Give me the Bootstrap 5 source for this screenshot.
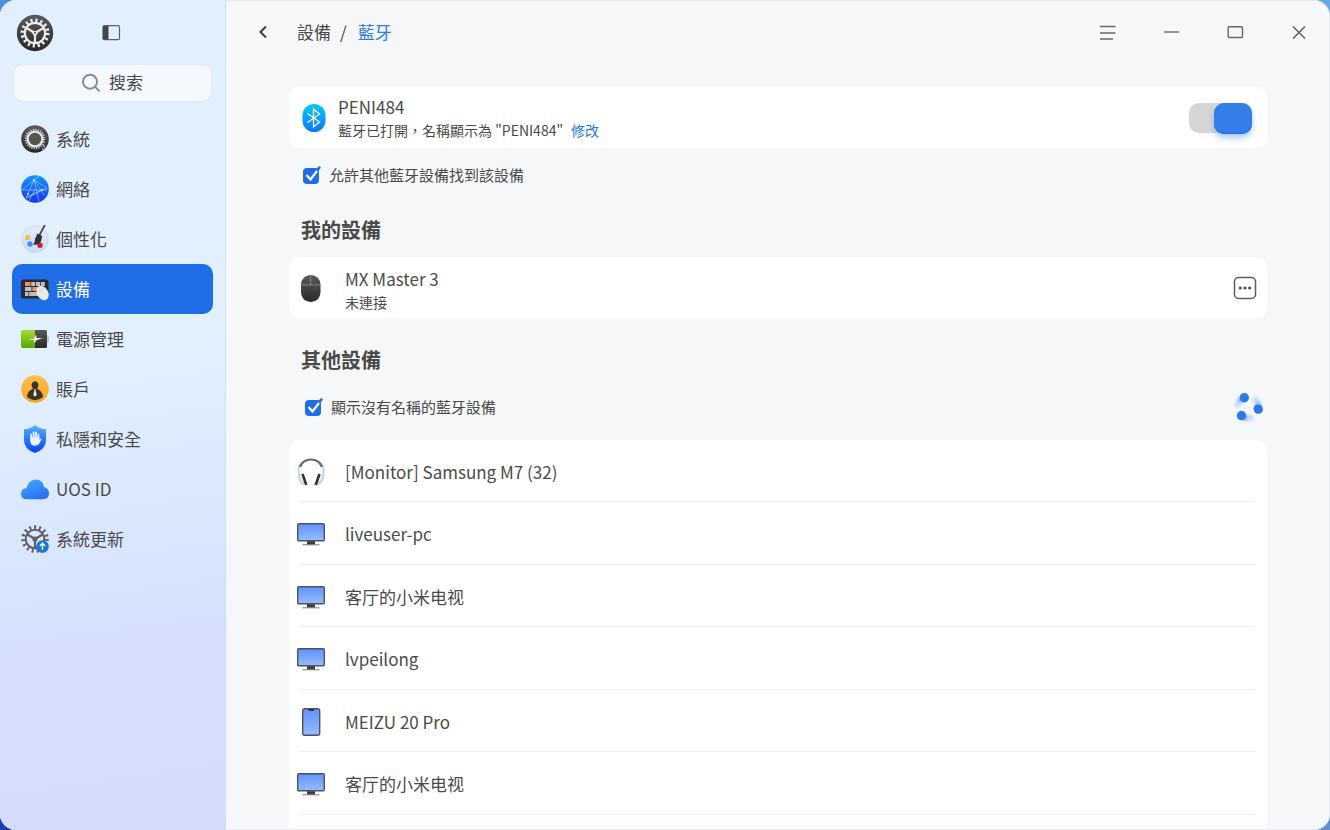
<!DOCTYPE html>
<html lang="zh-Hant">
<head>
<meta charset="utf-8">
<meta name="viewport" content="width=device-width, initial-scale=1">
<title>藍牙</title>
<link href="https://cdn.jsdelivr.net/npm/bootstrap@5.3.0/dist/css/bootstrap.min.css" rel="stylesheet">
<style>
  :root { --accent: #1f6ee7; --ink: #4a4a4a; }
  body {
    font-family: "Noto Sans CJK TC", "Noto Sans CJK SC", sans-serif;
    font-size: 17px; line-height: 24px; color: var(--ink);
    background: linear-gradient(90deg, #4a90dc 0 50%, #68a8e6 50%) top / 100% 50% no-repeat,
                linear-gradient(90deg, #1a3db8 0 50%, #6490cc 50%) bottom / 100% 50% no-repeat;
  }
  button { font: inherit; color: inherit; }
  .app-window { border-radius: 16px; background: #f6f7f9; box-shadow: inset 0 0 0 1px #e3eaf6; }
  .sidebar {
    width: 226px; padding: 0 12px; border-right: 1px solid #d3def0;
    background: linear-gradient(172deg, #e1efff 0%, #e2f0fe 42%, #dae7fd 63%, #d5dffd 78%, #d4dcfd 100%);
  }
  .sidebar-head { height: 64px; padding: 1px 0 0 4px; gap: 48px; }
  .search-box {
    height: 38px; margin: 0 1px; border: 1px solid #e4eaf1; border-radius: 10px; background: #f5f8fd;
  }
  .search-box input { width: 35px; height: 24px; padding: 0; margin-bottom: 2px; border: 0; outline: 0; background: none; color: var(--ink); }
  .search-box input::placeholder { color: var(--ink); opacity: 1; }
  .side-nav { margin-top: 12px; }
  .side-nav .nav-link {
    height: 50px; padding: 0 9px; gap: 7px; border-radius: 10px; color: var(--ink);
    display: flex; align-items: center;
  }
  .side-nav .nav-link.active { background: var(--accent); color: #fff; }
  .side-nav svg { width: 28px; height: 28px; flex: none; }
  .titlebar { height: 64px; padding: 0 19px 0 28px; }
  .crumbs { padding-left: 25px; gap: 9px; }
  .crumbs a { color: inherit; text-decoration: none; }
  .crumbs .current { color: #2f7cea; padding-left: 2px; }
  .win-buttons { gap: 40px; }
  .content { padding: 23px 63px 1px; }
  .panel { background: #fff; border-radius: 10px; }
  .device-panel { height: 61px; padding: 0 10px 0 8px; }
  .host-panel { padding: 0 15px 0 13px; }
  .sub-text { font-size: 14px; line-height: 22px; }
  .sub-text a { color: #2577e3; text-decoration: none; }
  .check-row { height: 22px; font-size: 15px; line-height: 20px; gap: 7px; }
  .check-row label { padding-bottom: 2px; }
  .visible-row { margin: 17px 0 1px 13px; }
  .unnamed-row { margin: 10px 3px 21px 15px; }
  .tick-input {
    appearance: none; width: 20px; height: 20px; margin: 0; flex: none;
    background: url("data:image/svg+xml,%3Csvg xmlns='http://www.w3.org/2000/svg' viewBox='0 0 20 20'%3E%3Crect x='1' y='2' width='16' height='16' rx='4' fill='%231f6ee7'/%3E%3Cpath d='M4.500 9l4 4.500L15 5' fill='none' stroke='white' stroke-width='2.200'/%3E%3Cpath d='M16.200 3l1-1.300' stroke='%231f6ee7' stroke-width='2.800' stroke-linecap='round'/%3E%3C/svg%3E");
  }
  .section-title { font-size: 20px; line-height: 50px; font-weight: 700; margin: 17px 0 2px 12px; }
  .switch-input {
    appearance: none; position: relative; width: 63px; height: 30px; margin: 0;
    border-radius: 10px; background: #d6d6d6;
  }
  .switch-input::before {
    content: ""; position: absolute; inset: 0 0 -1px 25px; border-radius: 10px;
    background: #357de9; box-shadow: 0 4px 6px #2f7cea66, inset 0 -1px 1px #1f6ee7;
  }
  .device-list { border-radius: 10px 10px 0 0; }
  .device-list li { position: relative; height: 62px; padding: 1px 12px 0 8px; gap: 20px; }
  .device-list li:nth-child(even) { height: 63px; }
  .device-list li::after {
    content: ""; position: absolute; left: 11px; right: 12px; bottom: 0; height: 1px; background: #f0f0f0;
  }
  .device-list svg { width: 28px; height: 28px; flex: none; }
</style>
</head>
<body>
<svg width="0" height="0" class="position-absolute" aria-hidden="true">
  <defs>
    <linearGradient id="gDark" x2="0" y2="1"><stop stop-color="#5a5a5a"/><stop offset="1" stop-color="#292929"/></linearGradient>
    <linearGradient id="gBlue" x2="0" y2="1"><stop stop-color="#1597ff"/><stop offset="1" stop-color="#1434f6"/></linearGradient>
    <linearGradient id="gShield" x2="0" y2="1"><stop stop-color="#4cb3ff"/><stop offset="1" stop-color="#0b3ff8"/></linearGradient>
    <linearGradient id="gBt" x2="0" y2="1"><stop stop-color="#0bc8fc"/><stop offset="1" stop-color="#0877fc"/></linearGradient>
    <linearGradient id="gCloud" x2=".6" y2="1"><stop stop-color="#3fb0ff"/><stop offset="1" stop-color="#2a70fa"/></linearGradient>
    <linearGradient id="gScreen" x2="0" y2="1"><stop stop-color="#5f92fb"/><stop offset="1" stop-color="#97bdfd"/></linearGradient>
    <linearGradient id="gGreen" x2="0" y2="1"><stop stop-color="#a2df32"/><stop offset="1" stop-color="#58a606"/></linearGradient>
    <linearGradient id="gGold" x2="0" y2="1"><stop stop-color="#ffc04f"/><stop offset="1" stop-color="#f9a51e"/></linearGradient>
    <linearGradient id="gPale" x2="0" y2="1"><stop stop-color="#e6edf9"/><stop offset="1" stop-color="#c7dcfb"/></linearGradient>
    <symbol id="monitor" viewBox="0 0 28 28">
      <rect x=".7" y="3.700" width="26.600" height="17" rx="1" fill="url(#gScreen)" stroke="#4c5363" stroke-width="1.400"/>
      <path d="M10 21.200h8v3.400h-8z" fill="#3c3c3c"/><path d="M5.500 24.800h17" stroke="#777" stroke-width="1"/>
    </symbol>
  </defs>
</svg>

<div class="app-window d-flex vh-100 overflow-hidden">
  <aside class="sidebar flex-shrink-0">
    <div class="sidebar-head d-flex align-items-center">
      <svg width="38" height="38" viewBox="0 0 38 38" aria-hidden="true">
        <circle cx="19" cy="19" r="18.200" fill="url(#gDark)"/>
        <g fill="none" stroke="#ececec">
          <circle cx="19" cy="19" r="12.700" stroke-width="3.600" stroke-dasharray="2.200 2.787"/>
          <circle cx="19" cy="19" r="10.200" stroke-width="2.200"/>
          <path d="M19 19v9.500M19 19l-8.500-5M19 19l8.500-5" stroke-width="2.200"/>
        </g>
        <path d="M19 23.500l-4.500-7q4.500 1 9 0z" fill="#ececec"/><circle cx="19" cy="18.800" r="1" fill="#555"/>
      </svg>
      <button class="btn p-0 border-0 d-flex" aria-label="側欄">
        <svg width="19" height="18" viewBox="0 0 19 18"><rect x="1" y="1.700" width="16.500" height="14" rx="1.500" fill="none" stroke="#5d6066" stroke-width="1.200"/><path d="M1 2h5.500v13.500H1z" fill="#43464d"/></svg>
      </button>
    </div>
    <label class="search-box d-flex align-items-center justify-content-center gap-2">
      <svg width="20" height="20" viewBox="0 0 20 20" fill="none" stroke="#888b90" stroke-width="1.900"><circle cx="9" cy="8.700" r="7"/><path d="M14 13.700l4.600 4.700"/></svg>
      <input type="text" placeholder="搜索" aria-label="搜索">
    </label>
    <nav class="side-nav nav flex-column">
      <a class="nav-link" href="#"><svg viewBox="0 0 28 28"><circle cx="14" cy="14" r="13.800" fill="url(#gDark)"/><circle cx="14" cy="14" r="9.300" fill="none" stroke="#d7d7d7" stroke-width="2" stroke-dasharray="1.200 1.234"/><circle cx="14" cy="14" r="7.400" fill="#555" stroke="#e3e3e3" stroke-width="2.400"/><path d="M20 19l4 2-3 4" fill="none" stroke="#bbb" stroke-width="1.500" stroke-dasharray="1.500 1"/></svg>系統</a>
      <a class="nav-link" href="#"><svg viewBox="0 0 28 28"><circle cx="14" cy="14" r="13.800" fill="url(#gBlue)"/><g fill="none" stroke="#a9d6ff" stroke-width=".6"><path d="M1 15h25M13 5L5 23l17-9M13 5l5 21M13 5l10 15M5 23L26 13M18 1l-5 4 13 8M14 14l-6 12M13 5L1 15"/></g><circle cx="13" cy="5" r="1" fill="#d7efff"/><circle cx="7" cy="19" r="1" fill="#d7efff"/><circle cx="21" cy="15" r="1" fill="#d7efff"/></svg>網絡</a>
      <a class="nav-link" href="#"><svg viewBox="0 0 28 28"><circle cx="14" cy="14.300" r="13.300" fill="url(#gPale)" stroke="#bdcbe3" stroke-width=".5"/><circle cx="12.500" cy="6.500" r="3" fill="#e8effc" stroke="#cedbf1" stroke-width=".5"/><circle cx="6.700" cy="12.700" r="2.600" fill="#f6bb45"/><circle cx="9" cy="19" r="2.700" fill="#3f8cf5"/><circle cx="19" cy="20.200" r="2.700" fill="#df1740"/><path d="M23.600.5L18.600 10" stroke="#5a5148" stroke-width="1.900" stroke-linecap="round"/><path d="M16.500 8.500l4.700 2.500-1.200 5.500c-1.500 2.700-4.500 3.400-8 3.300 2-1.800 1.500-4.600 2.500-7z" fill="#333"/></svg>個性化</a>
      <a class="nav-link active" href="#" aria-current="page"><svg viewBox="0 0 28 28"><rect y="4.500" width="27.500" height="19" rx="2.500" fill="#252c36"/><path d="M4 7h5.500v4H4z" fill="#fb8852"/><path d="M10.200 7h4v4h-4zM15 7h4v4h-4zM19.800 7h4v4h-4zM4 12h6.500v4H4zM4 17h3.500v4H4zM8.200 17H18v4H8.200zM19 12h5v4h-5z" fill="#bcc0c4"/><path d="M11.300 12H18v4h-6.700z" fill="#fb8852"/><ellipse cx="21.500" cy="18" rx="5.500" ry="7.800" transform="rotate(-32 21.500 18)" fill="#eaeaea"/><path d="M16.500 15.500c3.500 1.500 5.500 0 7-3.500M20 15l-2-3" fill="none" stroke="#c9c9c9" stroke-width=".6"/></svg>設備</a>
      <a class="nav-link" href="#"><svg viewBox="0 0 28 28"><path d="M14 5h10.500q1.500 0 1.500 1.500v15q0 1.500-1.500 1.500H14z" fill="url(#gDark)"/><path d="M14 5H2Q0 5 0 7v14q0 2 2 2h12z" fill="url(#gGreen)"/><path d="M26.300 10.500h.5q1 0 1 1v5q0 1-1 1h-.5z" fill="#b9bdc2"/><path d="M7 14.200l6-.4 2-4.300.7 3.500 6 .3-6 1.700-2.200 3-.5-3z" fill="#fff"/></svg>電源管理</a>
      <a class="nav-link" href="#"><svg viewBox="0 0 28 28"><circle cx="14" cy="14" r="13.800" fill="url(#gGold)"/><path d="M6 22c0-4 3-7 6-8.200q-3-4 0-6.800 2-1.400 4 0 3 2.800 0 6.800c3 1.200 6 4.200 6 8.200q-8 6.500-16 0z" fill="#3b342c"/><path d="M13 14.500h2l-.3 1.800 1.100 3.500-1.800 2-1.800-2 1.100-3.500z" fill="#eee"/></svg>賬戶</a>
      <a class="nav-link" href="#"><svg viewBox="0 0 28 28"><path d="M14 .3Q19 4.200 25 4.300v11.200Q25 24 14 28 3 24 3 15.500V4.300Q9 4.200 14 .3z" fill="url(#gShield)"/><path d="M10.200 15V9.500M12.600 14V7.500M15 14V7.500M17.400 15V9.500" stroke="#e8f4ff" stroke-width="1.800" stroke-linecap="round"/><path d="M9.300 12h9v3l1.100-1.300q1.300-.4 1 .7L18 19q-1.500 1.800-4.300 1.700-4.400-.2-4.400-4.400z" fill="#e8f4ff"/></svg>私隱和安全</a>
      <a class="nav-link" href="#"><svg viewBox="0 0 28 28"><path d="M6 24.300q-6-.2-6-5.400 0-5 5.500-5.800Q7.700 4.500 15 4.500q6.500.2 8 7.500 5 1.500 5 6.500-.2 5.600-6 5.800z" fill="url(#gCloud)"/></svg>UOS ID</a>
      <a class="nav-link" href="#"><svg viewBox="0 0 28 28"><g fill="none" stroke="#606164"><circle cx="14" cy="14" r="11.800" stroke-width="4" stroke-dasharray="2 2.943"/><circle cx="14" cy="14" r="9.300" stroke-width="2"/><path d="M14 14v9.500M14 14L6 9.200M14 14l8-4.800" stroke-width="2.200"/></g><circle cx="14" cy="14" r="2.600" fill="#606164"/><circle cx="21.500" cy="21.500" r="6.300" fill="#1479d4"/><path d="M21.500 25v-6.500M18.800 21l2.700-2.800 2.700 2.800" fill="none" stroke="#fff" stroke-width="1.400"/></svg>系統更新</a>
    </nav>
  </aside>

  <main class="flex-grow-1 d-flex flex-column overflow-hidden">
    <header class="titlebar d-flex align-items-center">
      <button class="btn p-0 border-0 d-flex" aria-label="返回"><svg width="18" height="18" viewBox="0 0 18 18"><path d="M12 3.500L6.500 9l5.500 5.500" fill="none" stroke="#3c3c3c" stroke-width="2"/></svg></button>
      <nav class="crumbs d-flex flex-grow-1" aria-label="路徑">
        <a href="#">設備</a><span>/</span><a class="current" href="#">藍牙</a>
      </nav>
      <div class="win-buttons d-flex">
        <button class="btn p-0 border-0 d-flex" aria-label="選單"><svg width="24" height="24" viewBox="0 0 24 24"><path d="M5 6.500h15.500M5 13h15.500M5 19h13" fill="none" stroke="#66686b" stroke-width="1.500"/></svg></button>
        <button class="btn p-0 border-0 d-flex" aria-label="最小化"><svg width="24" height="24" viewBox="0 0 24 24"><path d="M5 12h15" stroke="#77797c" stroke-width="1.600"/></svg></button>
        <button class="btn p-0 border-0 d-flex" aria-label="最大化"><svg width="24" height="24" viewBox="0 0 24 24"><rect x="5.200" y="6.700" width="14.300" height="10.800" rx="1" fill="none" stroke="#66686b" stroke-width="1.400"/></svg></button>
        <button class="btn p-0 border-0 d-flex" aria-label="關閉"><svg width="24" height="24" viewBox="0 0 24 24"><path d="M6 6.500l12 12M18 6.500l-12 12" stroke="#5f6164" stroke-width="1.600"/></svg></button>
      </div>
    </header>

    <div class="content d-flex flex-column flex-grow-1">
      <section class="panel device-panel host-panel d-flex align-items-center flex-shrink-0">
        <svg width="24" height="28" viewBox="0 0 24 28" aria-hidden="true"><rect x=".5" width="23" height="28" rx="11.500" fill="url(#gBt)"/><path d="M5.500 9.500l12 8.500-6 4.800V5.200l6 4.800-12 8.500" fill="none" stroke="#fff" stroke-width="1.300"/></svg>
        <div class="flex-grow-1 ms-2 ps-1">
          <div>PENI484</div>
          <div class="sub-text d-flex"><span>藍牙已打開，名稱顯示為 "PENI484"</span><a class="ms-2" href="#">修改</a></div>
        </div>
        <input class="switch-input" type="checkbox" role="switch" checked aria-label="藍牙">
      </section>
      <div class="check-row visible-row d-flex align-items-center flex-shrink-0">
        <input class="tick-input" type="checkbox" id="discoverable" checked>
        <label for="discoverable">允許其他藍牙設備找到該設備</label>
      </div>

      <h2 class="section-title">我的設備</h2>
      <section class="panel device-panel d-flex align-items-center flex-shrink-0">
        <svg width="28" height="28" viewBox="0 0 28 28" aria-hidden="true"><rect x="4" y="1" width="19.500" height="27" rx="9.500" fill="url(#gDark)"/><path d="M4 11h19.500M13.700 1v10" stroke="#969696" stroke-width=".8"/></svg>
        <div class="flex-grow-1 ms-3 ps-1 pt-1">
          <div>MX Master 3</div>
          <div class="sub-text">未連接</div>
        </div>
        <button class="btn p-0 border-0 d-flex" aria-label="更多"><svg width="24" height="24" viewBox="0 0 24 24"><rect x="1.500" y="1.500" width="21" height="21" rx="4" fill="none" stroke="#5c5c5c" stroke-width="1.500"/><g fill="#4c4c4c"><circle cx="7.300" cy="12" r="1.600"/><circle cx="12" cy="12" r="1.600"/><circle cx="16.700" cy="12" r="1.600"/></g></svg></button>
      </section>

      <h2 class="section-title">其他設備</h2>
      <div class="check-row unnamed-row d-flex align-items-center flex-shrink-0">
        <input class="tick-input" type="checkbox" id="unnamed" checked>
        <label class="flex-grow-1" for="unnamed">顯示沒有名稱的藍牙設備</label>
        <svg width="32" height="32" viewBox="0 0 32 32" role="img" aria-label="搜尋中">
          <defs>
            <filter id="soft" x="-80%" y="-80%" width="260%" height="260%"><feGaussianBlur stdDeviation="1.300"/></filter>
            <g id="comet"><path d="M12 6q-6 3-7 9" fill="none" stroke="#a9c9f8" stroke-opacity=".6" stroke-width="6" filter="url(#soft)"/><path d="M12 6q-3 1-4.500 3.500" fill="none" stroke="#6ea4f2" stroke-opacity=".7" stroke-width="6" filter="url(#soft)"/><circle cx="12.300" cy="5.800" r="4.700" fill="#2f78e9"/></g>
          </defs>
          <use href="#comet"/><use href="#comet" transform="rotate(120 16 15.500)"/><use href="#comet" transform="rotate(240 16 15.500)"/>
        </svg>
      </div>

      <ul class="panel device-list list-unstyled mb-0 flex-grow-1">
        <li class="d-flex align-items-center"><svg viewBox="0 0 28 28"><path d="M2.500 18Q-1 6 7 3.500M25.500 18Q29 6 21 3.500" fill="none" stroke="#a6d1fa" stroke-width="1.500"/><path d="M3 9Q6 1.500 14 1.500T25 9" fill="none" stroke="#69696b" stroke-width="2.200"/><path d="M2 16q0 8 5 10M26 16q0 8-5 10" fill="none" stroke="#d5d5d7" stroke-width="3"/><path d="M5.500 16l3.800 11M22.500 16l-3.800 11" stroke="#333" stroke-width="2.600"/></svg><span>[Monitor] Samsung M7 (32)</span></li>
        <li class="d-flex align-items-center"><svg><use href="#monitor"/></svg><span>liveuser-pc</span></li>
        <li class="d-flex align-items-center"><svg><use href="#monitor"/></svg><span lang="zh-Hans">客厅的小米电视</span></li>
        <li class="d-flex align-items-center"><svg><use href="#monitor"/></svg><span>lvpeilong</span></li>
        <li class="d-flex align-items-center"><svg viewBox="0 0 28 28"><rect x="5.700" y=".7" width="17" height="26.600" rx="2" fill="url(#gScreen)" stroke="#4c5363" stroke-width="1.400"/><path d="M11 1h6.500l-1 2h-4.500z" fill="#333"/></svg><span>MEIZU 20 Pro</span></li>
        <li class="d-flex align-items-center"><svg><use href="#monitor"/></svg><span lang="zh-Hans">客厅的小米电视</span></li>
      </ul>
    </div>
  </main>
</div>
<script src="https://cdn.jsdelivr.net/npm/bootstrap@5.3.0/dist/js/bootstrap.bundle.min.js"></script>
</body>
</html>
